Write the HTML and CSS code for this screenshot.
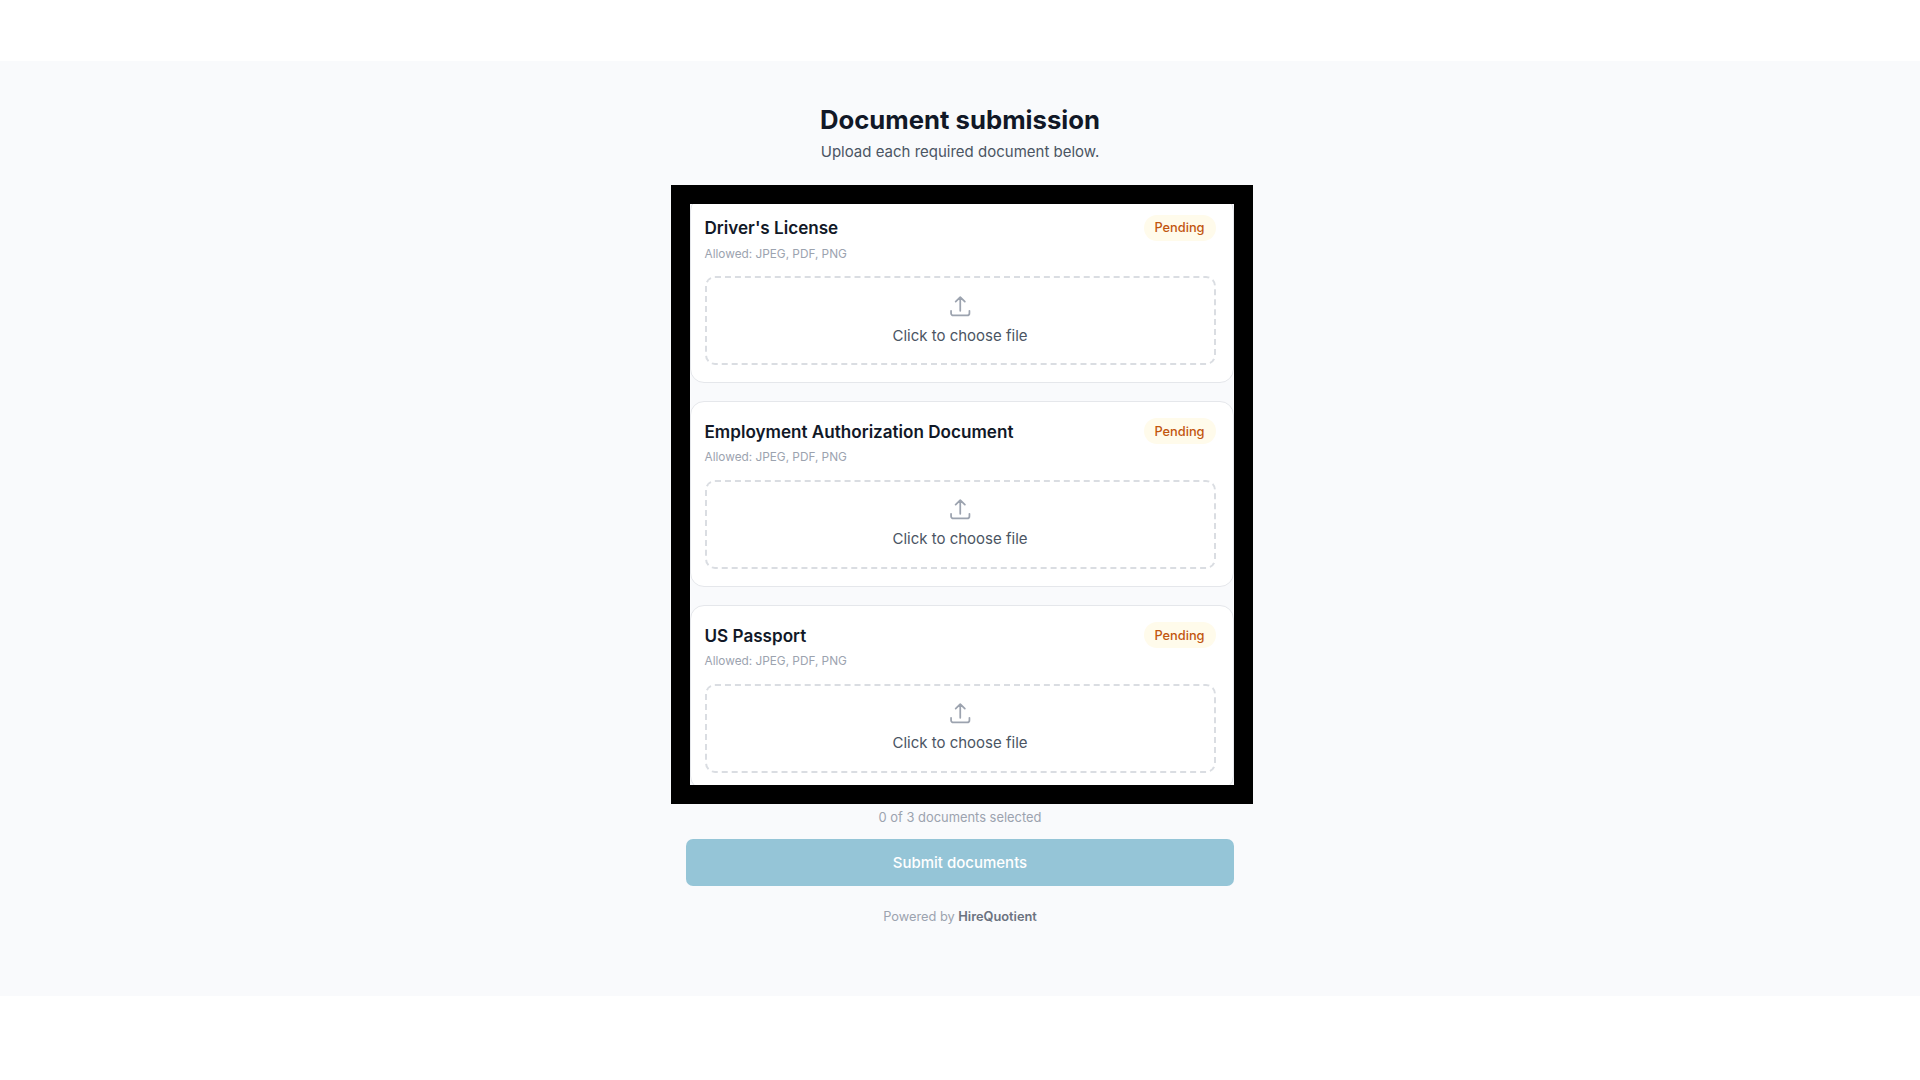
FILE: index.html
```html
<!DOCTYPE html>
<html lang="en">
<head>
    <meta charset="UTF-8">
    <meta name="viewport" content="width=device-width, initial-scale=1.0">
    <title>Document submission</title>
    <link rel="stylesheet" href="styles.css">
</head>
<body>
    <main class="page">
        <h1 class="title">Document submission</h1>
        <p class="subtitle">Upload each required document below.</p>

        <div class="doc-list">
            <div class="doc-scroll">
                <section class="doc-card">
                    <div class="doc-head">
                        <h2 class="doc-name">Driver's License</h2>
                        <span class="badge">Pending</span>
                    </div>
                    <p class="doc-allowed">Allowed: JPEG, PDF, PNG</p>
                    <label class="dropzone">
                        <svg class="upload-icon" viewBox="0 0 24 24" fill="none"><path d="M3 16.5v2.25A2.25 2.25 0 0 0 5.25 21h13.5A2.25 2.25 0 0 0 21 18.75V16.5m-13.5-9L12 3m0 0 4.5 4.5M12 3v13.5"/></svg>
                        <span class="dropzone-text">Click to choose file</span>
                    </label>
                </section>

                <section class="doc-card">
                    <div class="doc-head">
                        <h2 class="doc-name">Employment Authorization Document</h2>
                        <span class="badge">Pending</span>
                    </div>
                    <p class="doc-allowed">Allowed: JPEG, PDF, PNG</p>
                    <label class="dropzone">
                        <svg class="upload-icon" viewBox="0 0 24 24" fill="none"><path d="M3 16.5v2.25A2.25 2.25 0 0 0 5.25 21h13.5A2.25 2.25 0 0 0 21 18.75V16.5m-13.5-9L12 3m0 0 4.5 4.5M12 3v13.5"/></svg>
                        <span class="dropzone-text">Click to choose file</span>
                    </label>
                </section>

                <section class="doc-card">
                    <div class="doc-head">
                        <h2 class="doc-name">US Passport</h2>
                        <span class="badge">Pending</span>
                    </div>
                    <p class="doc-allowed">Allowed: JPEG, PDF, PNG</p>
                    <label class="dropzone">
                        <svg class="upload-icon" viewBox="0 0 24 24" fill="none"><path d="M3 16.5v2.25A2.25 2.25 0 0 0 5.25 21h13.5A2.25 2.25 0 0 0 21 18.75V16.5m-13.5-9L12 3m0 0 4.5 4.5M12 3v13.5"/></svg>
                        <span class="dropzone-text">Click to choose file</span>
                    </label>
                </section>
            </div>
        </div>

        <p class="count">0 of 3 documents selected</p>
        <button class="submit" type="button" disabled>Submit documents</button>
        <p class="powered">Powered by <strong>HireQuotient</strong></p>
    </main>
</body>
</html>
```

FILE: styles.css
```css
* {
    box-sizing: border-box;
}
body {
    margin: 0;
    background: #fff;
    font-family: Inter, "Liberation Sans", sans-serif;
}
.page {
    margin-top: 61px;
    height: 935px;
    background: #f9fafc;
    display: flex;
    flex-direction: column;
    align-items: center;
    padding-top: 42.5px;
}
.title {
    margin: 0;
    font-size: 25.7px;
    line-height: 32px;
    font-weight: 700;
    color: #111827;
}
.subtitle {
    margin: 5.5px 0 0;
    font-size: 15px;
    line-height: 22px;
    color: #4b5563;
}
.doc-list {
    width: 582px;
    height: 619px;
    margin: 21.5px 0 0 3px;
    border: 19px solid #000;
    overflow: hidden;
}
.doc-scroll {
    margin-top: -6.2px;
    display: flex;
    flex-direction: column;
    gap: 18.2px;
}
.doc-card {
    flex: none;
    height: 185.6px;
    padding: 16.2px 17px 0 14px;
    background: #fff;
    border: 1px solid #e5e7eb;
    border-radius: 14px;
}
.doc-head {
    display: flex;
    justify-content: space-between;
    align-items: center;
    height: 26px;
}
.doc-name {
    margin: 0;
    font-size: 17.1px;
    font-weight: 600;
    color: #111827;
}
.badge {
    width: 72px;
    height: 26px;
    border-radius: 13px;
    background: #fffbeb;
    color: #c2560f;
    font-size: 12.8px;
    font-weight: 500;
    display: flex;
    align-items: center;
    justify-content: center;
}
.doc-allowed {
    margin: 3px 0 0;
    font-size: 11.8px;
    line-height: 20px;
    color: #9ca3af;
}
.dropzone {
    height: 89px;
    margin-top: 12.5px;
    border: 2px dashed #dadde2;
    border-radius: 10px;
    display: flex;
    flex-direction: column;
    align-items: center;
    padding-top: 15.5px;
}
.upload-icon {
    width: 24.5px;
    height: 24.5px;
    stroke: #9ca3af;
    stroke-width: 1.7;
    stroke-linecap: round;
    stroke-linejoin: round;
}
.dropzone-text {
    margin-top: 6.7px;
    font-size: 15px;
    line-height: 22px;
    color: #4b5563;
}
.count {
    margin: 4px 0 0;
    font-size: 12.9px;
    line-height: 20px;
    color: #9ca3af;
}
.submit {
    width: 548px;
    height: 47px;
    margin-top: 11px;
    border: none;
    border-radius: 7px;
    background: #95c5d7;
    color: #fff;
    font-family: inherit;
    font-size: 15px;
    font-weight: 500;
}
.powered {
    margin: 21px 0 0;
    font-size: 12.8px;
    line-height: 20px;
    color: #9ca3af;
}
.powered strong {
    font-weight: 600;
    color: #6b7280;
}
```
